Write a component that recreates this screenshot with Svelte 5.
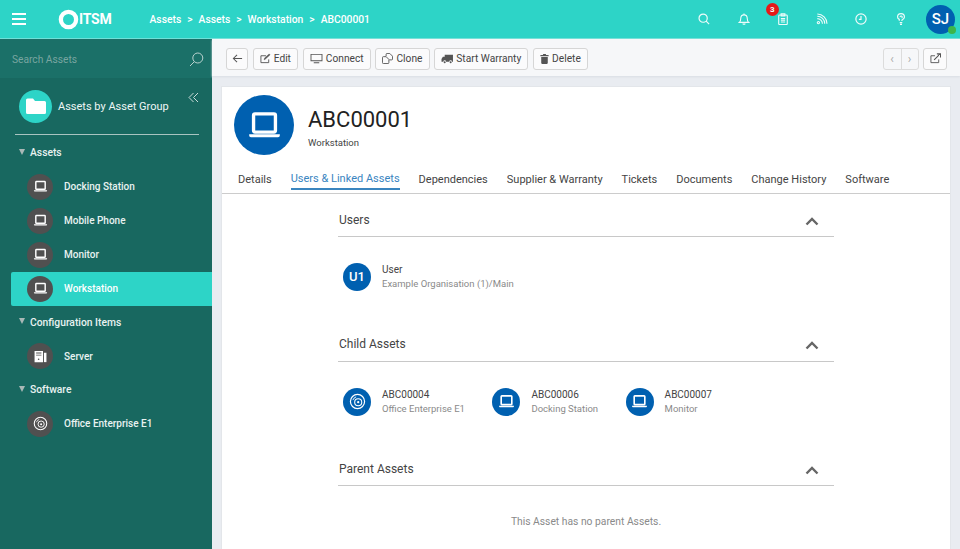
<script>
  const crumbs = ["Assets", "Assets", "Workstation", "ABC00001"];
  const tabs = ["Details", "Users & Linked Assets", "Dependencies", "Supplier & Warranty", "Tickets", "Documents", "Change History", "Software"];
  const groups = [
    { name: "Assets", items: [
      { name: "Docking Station", icon: "laptop" },
      { name: "Mobile Phone", icon: "laptop" },
      { name: "Monitor", icon: "laptop" },
      { name: "Workstation", icon: "laptop", active: true }
    ] },
    { name: "Configuration Items", items: [{ name: "Server", icon: "server" }] },
    { name: "Software", items: [{ name: "Office Enterprise E1", icon: "disc" }] }
  ];
  const children = [
    { id: "ABC00004", sub: "Office Enterprise E1", icon: "disc" },
    { id: "ABC00006", sub: "Docking Station", icon: "laptop" },
    { id: "ABC00007", sub: "Monitor", icon: "laptop" }
  ];
</script>

{#snippet laptop(size)}
  <svg width={size} height={size} viewBox="0 0 24 24" fill="none">
    <rect x="4.500" y="4" width="15" height="12.500" rx="1" stroke="currentColor" stroke-width="2.300"/>
    <path d="M1.500 18h21v.8a1.200 1.200 0 0 1-1.200 1.200H2.700a1.200 1.200 0 0 1-1.200-1.200z" fill="currentColor"/>
  </svg>
{/snippet}

{#snippet disc(size)}
  <svg width={size} height={size} viewBox="0 0 24 24" fill="none" stroke="currentColor">
    <circle cx="12" cy="12" r="10" stroke-width="1.700"/>
    <circle cx="13" cy="13" r="5" stroke-width="1.500"/>
    <circle cx="13" cy="13" r="1.600" fill="currentColor" stroke="none"/>
    <path d="M5.500 10a7 7 0 0 1 4.500-4.500" stroke-width="1.300"/>
  </svg>
{/snippet}

{#snippet server(size)}
  <svg width={size} height={size} viewBox="0 0 24 24">
    <path fill="currentColor" fill-rule="evenodd" d="M2.500 3h13.500v18H2.500zM5 5.500V7h8.500V5.500zm0 3.500v1.500h8.500V9zM9 15a1.300 1.300 0 1 0 0 2.600A1.300 1.300 0 0 0 9 15z"/>
    <path fill="currentColor" d="M17.500 6H21.500v15h-4z"/>
  </svg>
{/snippet}

{#snippet assetIcon(name, size)}
  {#if name === "laptop"}
    {@render laptop(size)}
  {:else if name === "disc"}
    {@render disc(size)}
  {:else}
    {@render server(size)}
  {/if}
{/snippet}

{#snippet chevron()}
  <svg width="14" height="9" viewBox="0 0 14 9" fill="none" stroke="#666" stroke-width="2.400"><path d="M1.500 7.500L7 2l5.500 5.500"/></svg>
{/snippet}

<div class="app">
  <header class="topbar">
    <button class="burger" aria-label="Menu"><span></span><span></span><span></span></button>
    <div class="logo">
      <svg width="21" height="21" viewBox="0 0 22 22" fill="none">
        <circle cx="11" cy="11" r="8" stroke="#fff" stroke-width="4.500"/>
      </svg>
      <span>ITSM</span>
    </div>
    <nav class="crumbs">
      {#each crumbs as c, i}
        {#if i > 0}<span class="sep">&gt;</span>{/if}
        <span>{c}</span>
      {/each}
    </nav>
    <div class="top-icons">
      <svg class="ti" width="12" height="12" viewBox="0 0 14 14" fill="none" stroke="#fff" stroke-width="1.400">
        <circle cx="6" cy="6" r="4.800"/><path d="M9.500 9.500L13 13"/>
      </svg>
      <svg class="ti" width="12" height="12" viewBox="0 0 14 14" fill="none" stroke="#fff" stroke-width="1.300">
        <path d="M1.500 11c1.300-1 1.700-2 1.700-4.500C3.200 4 4.800 2.200 7 2.200s3.800 1.800 3.800 4.300c0 2.500.4 3.500 1.700 4.500z"/>
        <path d="M5.600 12.200a1.500 1.500 0 0 0 2.800 0M7 .5v1.700"/>
      </svg>
      <div class="ti clip">
        <span class="badge">3</span>
        <svg width="12" height="12" viewBox="0 0 14 14" fill="none" stroke="#fff" stroke-width="1.300">
          <rect x="2" y="2.400" width="10" height="11" rx="1"/>
          <path d="M4.800 1h4.400v2.400H4.800zM4.500 6.500h5M4.500 8.500h5M4.500 10.500h5"/>
        </svg>
      </div>
      <svg class="ti" width="12" height="12" viewBox="0 0 14 14" fill="none" stroke="#fff" stroke-width="1.300">
        <circle cx="2.800" cy="11.200" r="1.300"/>
        <path d="M1.500 6.500a6 6 0 0 1 6 6M1.500 3.800a8.700 8.700 0 0 1 8.700 8.700M1.500 1.200a11.300 11.300 0 0 1 11.300 11.300"/>
      </svg>
      <svg class="ti" width="12" height="12" viewBox="0 0 14 14" fill="none" stroke="#fff" stroke-width="1.400">
        <circle cx="7" cy="7" r="6"/><path d="M7 3.500V7.500H4.500"/>
      </svg>
      <svg class="ti" width="12" height="12" viewBox="0 0 14 14" fill="none" stroke="#fff" stroke-width="1.400">
        <path d="M5 9V7.400C3.500 6.800 3 5.800 3 4.700a4 4 0 0 1 8 0c0 1.700-1.300 2.400-2.200 3C8 8.200 8 8.600 8 9.300"/>
        <path d="M5.500 11.200h3M5.800 13.200h2.400"/>
        <path d="M6 4.800a1.200 1.200 0 1 1 1.700 1"/>
      </svg>
      <div class="me">SJ<span class="dot"></span></div>
    </div>
  </header>

  <div class="body">
    <aside class="side">
      <div class="search">
        <span>Search Assets</span>
        <svg width="15" height="15" viewBox="0 0 15 15" fill="none" stroke="#b9d2cf" stroke-width="1">
          <circle cx="8.800" cy="6" r="5"/><path d="M5.300 9.700L1 14"/>
        </svg>
      </div>
      <div class="side-head">
        <div class="folder">
          <svg width="22" height="22" viewBox="0 0 22 22">
            <path fill="#fff" d="M1 5a1.500 1.500 0 0 1 1.500-1.500h5.500l2 2.500h9.500A1.500 1.500 0 0 1 21 7.500v10a1.500 1.500 0 0 1-1.500 1.500h-17A1.500 1.500 0 0 1 1 17.500z"/>
          </svg>
        </div>
        <span class="head-label">Assets by Asset Group</span>
        <svg class="collapse" width="11" height="11" viewBox="0 0 11 11" fill="none" stroke="#c9dcda" stroke-width="1">
          <path d="M5.500 1L1 5.500 5.500 10M10 1L5.500 5.500 10 10"/>
        </svg>
      </div>
      <div class="tree">
        {#each groups as g}
          <div class="group"><i class="tri"></i>{g.name}</div>
          {#each g.items as it}
            <div class="item" class:active={it.active}>
              <div class="bubble">{@render assetIcon(it.icon, 15)}</div>
              <span>{it.name}</span>
            </div>
          {/each}
        {/each}
      </div>
    </aside>

    <main class="main">
      <div class="toolbar">
        <button class="btn icon-only" aria-label="Back">
          <svg width="11" height="11" viewBox="0 0 12 12" fill="none" stroke="#555" stroke-width="1.100"><path d="M11 6H1.500M5.500 2L1.500 6l4 4"/></svg>
        </button>
        <button class="btn">
          <svg width="11" height="11" viewBox="0 0 12 12" fill="none" stroke="#555"><path d="M9.500 7v3.500h-8.500V3h5.500"/><path d="M4.500 7.500l.5-2L10 1l1 1-5 4.500z" fill="#555" stroke-width=".5"/></svg>
          Edit
        </button>
        <button class="btn">
          <svg width="13" height="11" viewBox="0 0 14 12"><path fill="#555" fill-rule="evenodd" d="M.5 1h13v8h-13zM1.500 2v6h11V2zM4 10.200h6v1H4z"/></svg>
          Connect
        </button>
        <button class="btn">
          <svg width="11" height="11" viewBox="0 0 12 12" fill="none" stroke="#555"><path d="M4.500 3.500v-2a1 1 0 0 1 1-1h3l3 3v3a1 1 0 0 1-1 1H8"/><path d="M.5 5a1 1 0 0 1 1-1h3l3 3v3.500a1 1 0 0 1-1 1h-5a1 1 0 0 1-1-1z"/></svg>
          Clone
        </button>
        <button class="btn">
          <svg width="12" height="11" viewBox="0 0 13 12"><path fill="#555" d="M4 2h9v7.500h-1a1.500 1.500 0 0 0-3 0H5.500a1.500 1.500 0 0 0-3 0H.5V6.500L2 4h2z"/><circle cx="4" cy="10" r="1.100" fill="#555"/><circle cx="10.500" cy="10" r="1.100" fill="#555"/></svg>
          Start Warranty
        </button>
        <button class="btn">
          <svg width="9" height="10" viewBox="0 0 11 12"><path fill="#555" d="M4 0h3l.5 1.200H10.500v1.300H.5V1.200H3.500zM1.500 3.500h8V11a1 1 0 0 1-1 1h-6a1 1 0 0 1-1-1z"/></svg>
          Delete
        </button>
        <div class="spacer"></div>
        <div class="pager">
          <button aria-label="Previous">‹</button>
          <button aria-label="Next">›</button>
        </div>
        <button class="btn icon-only ext" aria-label="Open in new window">
          <svg width="11" height="11" viewBox="0 0 12 12" fill="none" stroke="#555"><path d="M9.500 7v3.500H1V3h4.500"/><path d="M4.500 7.500L10.500 1.500M7.500 1h4v4" stroke-width="1.200"/></svg>
        </button>
      </div>

      <section class="card">
        <div class="asset-head">
          <div class="big">{@render laptop(35)}</div>
          <div class="asset-title">
            <h1>ABC00001</h1>
            <div class="type">Workstation</div>
          </div>
        </div>
        <div class="tabs">
          {#each tabs as t, i}
            <span class="tab" class:on={i === 1}>{t}</span>
          {/each}
        </div>
        <div class="content">
          <div class="sect users">
            <div class="sect-head"><span>Users</span>{@render chevron()}</div>
            <div class="row">
              <div class="entry">
                <div class="round">U1</div>
                <div class="entry-text"><div class="e1">User</div><div class="e2">Example Organisation (1)/Main</div></div>
              </div>
            </div>
          </div>
          <div class="sect kids">
            <div class="sect-head"><span>Child Assets</span>{@render chevron()}</div>
            <div class="row">
              {#each children as c}
                <div class="entry">
                  <div class="round">{@render assetIcon(c.icon, 17)}</div>
                  <div class="entry-text"><div class="e1">{c.id}</div><div class="e2">{c.sub}</div></div>
                </div>
              {/each}
            </div>
          </div>
          <div class="sect">
            <div class="sect-head"><span>Parent Assets</span>{@render chevron()}</div>
            <p class="none">This Asset has no parent Assets.</p>
          </div>
        </div>
      </section>
    </main>
  </div>
</div>

<style>
  :global(body) { margin: 0; overflow: hidden; }
  .app {
    width: 960px;
    height: 549px;
    overflow: hidden;
    display: flex;
    flex-direction: column;
    font-family: Roboto, "Liberation Sans", sans-serif;
    font-size: 10px;
    color: #333;
  }
  button { font-family: inherit; }

  .topbar {
    height: 38px;
    flex: none;
    background: #2dd4c7;
    border-bottom: 1px solid #6fe0d8;
    display: flex;
    align-items: center;
    color: #fff;
  }
  .burger {
    width: 14px;
    margin-left: 12px;
    padding: 0;
    border: 0;
    background: none;
    display: flex;
    flex-direction: column;
    gap: 3px;
  }
  .burger span { height: 2px; background: #fff; display: block; }
  .logo {
    margin-left: 32px;
    display: flex;
    align-items: center;
    font-size: 14px;
    font-weight: 700;
    letter-spacing: -.2px;
  }
  .crumbs {
    margin-left: 38px;
    display: flex;
    gap: 6px;
    font-size: 10.300px;
    font-weight: 500;
  }
  .top-icons {
    margin-left: auto;
    display: flex;
    align-items: center;
    padding-right: 5px;
    gap: 27.300px;
  }
  .ti { display: block; flex: none; opacity: .92; }
  .clip { position: relative; width: 12px; height: 12px; }
  .clip svg { display: block; }
  .badge {
    position: absolute;
    left: -11px;
    top: -10px;
    width: 13px;
    height: 13px;
    line-height: 13px;
    text-align: center;
    border-radius: 50%;
    background: #f50a0a;
    font-size: 8px;
    font-weight: 700;
  }
  .me {
    position: relative;
    width: 29px;
    height: 29px;
    margin-left: -8px;
    border-radius: 50%;
    background: #0060b0;
    font-size: 15px;
    font-weight: 500;
    line-height: 29px;
    text-align: center;
  }
  .dot {
    position: absolute;
    right: -1px;
    bottom: 0;
    width: 8px;
    height: 8px;
    border-radius: 50%;
    background: #3cb54a;
  }

  .body { flex: 1; display: flex; min-height: 0; }
  .side { width: 212px; flex: none; background: #186860; color: #e8f2f1; }
  .search {
    height: 39px;
    background: #1b7068;
    display: flex;
    align-items: center;
    justify-content: space-between;
    padding: 1px 8px 0 12px;
    box-sizing: border-box;
    color: #79a5a0;
    font-size: 10.200px;
  }
  .side-head {
    position: relative;
    margin: 0 13px 0 15px;
    height: 56px;
    border-bottom: 1px solid #a9c4c1;
    display: flex;
    align-items: center;
    gap: 6px;
    padding-left: 4px;
    font-size: 11px;
  }
  .folder {
    width: 33px;
    height: 33px;
    border-radius: 50%;
    background: #2dd4c7;
    display: flex;
    align-items: center;
    justify-content: center;
  }
  .head-label { color: #eef6f5; }
  .collapse { position: absolute; right: 0; top: 14px; }
  .tree { padding: 9px 0 0 11px; }
  .group {
    height: 17px;
    display: flex;
    align-items: center;
    padding-left: 8px;
    font-weight: 500;
    font-size: 10.300px;
  }
  .tri {
    width: 0;
    height: 0;
    border-left: 3px solid transparent;
    border-right: 3px solid transparent;
    border-top: 6px solid #a9b8b6;
    margin-right: 5px;
    margin-top: -2px;
  }
  .item {
    height: 34px;
    display: flex;
    align-items: center;
    padding-left: 16px;
    gap: 11px;
    font-weight: 500;
    font-size: 10px;
    border-radius: 2px 0 0 2px;
  }
  .group + .item { margin-top: 8.500px; }
  .item + .group { margin-top: 8px; }
  .item.active { background: #2dd4c7; color: #fff; }
  .bubble {
    width: 26px;
    height: 26px;
    border-radius: 50%;
    background: #505050;
    color: #fff;
    display: flex;
    align-items: center;
    justify-content: center;
  }

  .main { flex: 1; min-width: 0; background: #e9ecf1; display: flex; flex-direction: column; }
  .toolbar {
    height: 37px;
    flex: none;
    box-sizing: border-box;
    background: #f6f7f9;
    box-shadow: 0 1px 2px #d9dde3;
    display: flex;
    align-items: center;
    gap: 4.500px;
    padding: 2px 13px 0 14px;
  }
  .spacer { flex: 1; }
  .btn {
    height: 22px;
    padding: 0 6.200px;
    background: #fbfbfc;
    border: 1px solid #d6d6d6;
    border-radius: 3px;
    display: flex;
    align-items: center;
    gap: 3px;
    font-size: 10.200px;
    color: #444;
  }
  .icon-only { width: 22px; padding: 0; justify-content: center; }
  .ext { width: 24px; }
  .pager {
    display: flex;
    height: 22px;
    box-sizing: border-box;
    border: 1px solid #dcdcdc;
    border-radius: 3px;
  }
  .pager button {
    width: 17px;
    padding: 0;
    border: 0;
    background: none;
    color: #aaa;
    font-size: 12px;
  }
  .pager button + button { border-left: 1px solid #dcdcdc; }

  .card {
    flex: 1;
    margin: 10px 9px 0;
    background: #fff;
    border: 1px solid #e3e6ea;
    border-bottom: 0;
    min-height: 0;
  }
  .asset-head {
    display: flex;
    align-items: center;
    gap: 14px;
    padding: 8px 0 0 12px;
  }
  .asset-title { padding-top: 3px; }
  .big {
    width: 60px;
    height: 60px;
    border-radius: 50%;
    background: #0060b0;
    color: #fff;
    display: flex;
    align-items: center;
    justify-content: center;
  }
  h1 {
    margin: 0;
    font-size: 22px;
    font-weight: 400;
    line-height: 30px;
    color: #222;
  }
  .type { font-size: 9.500px; margin-top: 2px; color: #444; }
  .tabs {
    margin-top: 8px;
    height: 30px;
    padding: 0 0 0 16px;
    border-bottom: 1px solid #ccc;
    display: flex;
    gap: 19px;
    font-size: 11px;
    line-height: 14px;
    color: #444;
  }
  .tab { padding-top: 10px; }
  .tab.on {
    color: #3a85bf;
    padding-top: 9px;
    height: 16px;
    border-bottom: 2px solid #3a85bf;
  }

  .content { width: 496px; margin: 0 auto; padding-top: 19px; }
  .sect-head {
    height: 23px;
    border-bottom: 1px solid #c8c8c8;
    display: flex;
    align-items: flex-start;
    justify-content: space-between;
    font-size: 12px;
    line-height: 14px;
    color: #444;
    padding: 0 15px 0 1px;
  }
  .sect-head svg { margin-top: 4px; }
  .users { height: 125px; }
  .kids { height: 125px; margin-top: -1px; }
  .kids .sect-head { height: 24px; }
  .row { display: flex; gap: 27.500px; padding: 25px 0 0 5px; }
  .entry { display: flex; align-items: center; gap: 11px; }
  .entry-text { padding-top: 1px; }
  .round {
    width: 28px;
    height: 28px;
    border-radius: 50%;
    background: #0060b0;
    color: #fff;
    font-size: 13px;
    font-weight: 500;
    display: flex;
    align-items: center;
    justify-content: center;
  }
  .e1 { font-size: 10px; color: #444; line-height: 14px; }
  .e2 { font-size: 9.500px; color: #8a8a8a; line-height: 14px; }
  .none { margin: 29px 0 0; text-align: center; color: #8a8a8a; font-size: 10.300px; }
</style>
